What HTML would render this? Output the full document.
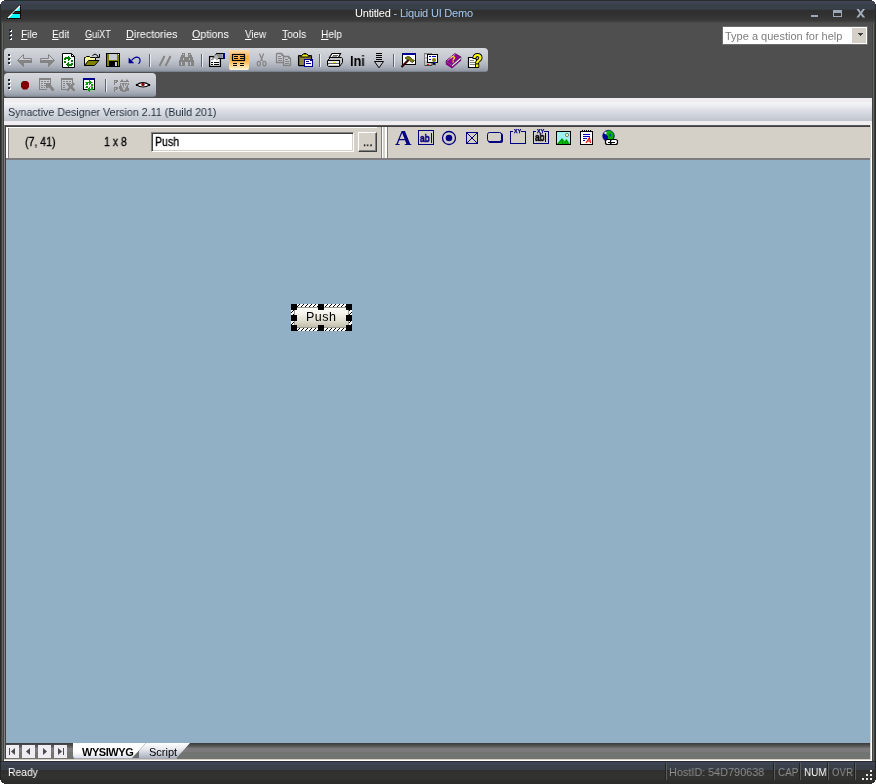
<!DOCTYPE html>
<html lang="en">
<head>
<meta charset="utf-8">
<title>Untitled - Liquid UI Demo</title>
<style>
html,body{margin:0;padding:0;}
body{width:876px;height:784px;overflow:hidden;background:#4f4f4f;position:relative;
 font-family:"Liberation Sans","DejaVu Sans",sans-serif;font-size:11px;color:#fff;}
.a{position:absolute;}
.t{position:absolute;white-space:nowrap;line-height:13px;height:13px;transform-origin:0 0;will-change:transform;}
u{text-decoration:underline;text-underline-offset:1px;}
/* ---------- window frame ---------- */
#title{left:0;top:0;width:876px;height:23px;
 background:linear-gradient(#2a2d2c 0,#2a2d2c 1px,#3f4454 1px,#3e4352 3.500px,#3a4049 4.500px,#39404a 9px,#313533 10px,#2e2f2e 11px,#323232 16px,#3b3b3b 21px,#464646 22px,#4d4d4d 23px);}
#lb{left:0;top:23px;width:4px;height:761px;background:linear-gradient(90deg,#282a28 0,#282a28 1px,#3e403e 1px,#3e403e 2px,#646664 2px,#646664 3px,#424242 3px,#424242 4px);}
#rb{left:872px;top:23px;width:4px;height:761px;background:linear-gradient(90deg,#444444 0,#444444 1px,#646664 1px,#646664 2px,#3e403e 2px,#3e403e 3px,#282a28 3px,#282a28 4px);}
#menubg{left:4px;top:23px;width:868px;height:75px;background:#4f4f4f;}
/* ---------- toolbars ---------- */
.tb{position:absolute;left:4px;height:24px;border-radius:4px 4px 3px 3px;
 background:linear-gradient(#d5d9de 0,#cdd1d6 5px,#c4c8ce 11px,#b4b9c2 16px,#a3a9b4 20px,#8f96a3 23px,#6b7380 24px);}
.grip{position:absolute;width:2px;height:2px;background:#1e2a38;box-shadow:1px 1px 0 #fff;}
.sep{position:absolute;width:1px;height:16px;background:#5c6470;box-shadow:1px 0 0 #e8ebf0;}
/* ---------- caption panel ---------- */
#cap{left:4px;top:98px;width:868px;height:27px;
 background:linear-gradient(#f0edf1 0,#f0edf1 4px,#f3f5f7 5px,#e0e3e9 11px,#d0d4db 17px,#c0c6ce 23px,#f0edf1 23px,#f0edf1 27px);}
/* ---------- dialog bar ---------- */
#dlg{left:6px;top:127px;width:864px;height:31px;background:#d4d0c8;}
#main{left:6px;top:160px;width:864px;height:583px;background:#91afc5;}
#tabbar{left:6px;top:743px;width:864px;height:16px;
 background:linear-gradient(#3a3a3a 0,#4c4c4c 2px,#686a68 4.500px,#7b797b 5.500px,#7b797b 8.500px,#727472 9.500px,#727472 16px);}
.nav{position:absolute;top:745px;width:13px;height:13px;background:#f0edf2;}
#status{left:0;top:761px;width:876px;height:23px;
 background:linear-gradient(#282b2e 0,#282b2e 1px,#3f4454 1px,#3e4352 3.500px,#3a4049 4.500px,#39404a 8.500px,#2f302e 9.500px,#333432 15px,#2b2b2a 23px);}
.k{color:#000;font-size:12px;line-height:14px;height:14px;transform:scaleX(0.88);-webkit-text-stroke:0.300px #000;}
.h{position:absolute;width:6px;height:6px;background:#000;}
.ssep{position:absolute;top:763px;width:1px;height:17px;background:#5c5c5c;box-shadow:-1px 0 0 #222;}
</style>
</head>
<body>
<div class="a" id="title"></div>
<div class="a" id="menubg"></div>
<div class="a" id="lb"></div>
<div class="a" id="rb"></div>

<!-- toolbars -->
<div class="tb" id="tb1" style="top:48px;width:484px;"></div>
<div class="tb" id="tb2" style="top:73px;width:152px;"></div>

<div class="a" id="cap"></div>
<div class="a" style="left:5px;top:125px;width:865px;height:2px;background:linear-gradient(#585858 0,#585858 1px,#404040 1px,#404040 2px);"></div>
<div class="a" id="dlg"></div>
<div class="a" id="main"></div>
<div class="a" id="tabbar"></div>
<div class="a" style="left:4px;top:759px;width:868px;height:2px;background:linear-gradient(#d4d0c8 0,#d4d0c8 1px,#fff 1px,#fff 2px);"></div>
<div class="a" style="left:870px;top:125px;width:2px;height:635px;background:linear-gradient(90deg,#d4d0c8 0,#d4d0c8 1px,#fff 1px,#fff 2px);"></div><div class="a" style="left:870px;top:760px;width:2px;height:1px;background:#fff;"></div>
<div class="a" id="status"></div>

<div class="a" style="left:0;top:4px;width:1px;height:19px;background:#2a2c2b;"></div><div class="a" style="left:875px;top:4px;width:1px;height:19px;background:#2a2c2b;"></div><div class="a" style="left:0;top:761px;width:1px;height:23px;background:#242624;"></div><div class="a" style="left:875px;top:761px;width:1px;height:23px;background:#242624;"></div>
<!--TITLE-->
<svg class="a" style="left:7px;top:5px" width="14" height="14" viewBox="0 0 14 14">
 <polygon points="13,0.3 13,13 0.3,13" fill="#00ffff"/>
 <rect x="13" y="0" width="1" height="14" fill="#000"/>
 <rect x="0" y="13" width="14" height="1" fill="#000"/>
 <line x1="0.300" y1="12.300" x2="12.600" y2="0" stroke="#141414" stroke-width="0.700"/>
 <line x1="1" y1="13" x2="13" y2="1" stroke="#fff" stroke-width="1.3"/>
 <rect x="7.5" y="6" width="5.5" height="1" fill="#101010"/>
 <rect x="6.5" y="7" width="6.5" height="1" fill="#3a2020"/>
 <rect x="5.5" y="8" width="7.5" height="1" fill="#101010"/>
</svg>
<div class="t" id="ttl" style="left:354.5px;top:7px;font-size:11px;letter-spacing:-0.2px;color:#fff;">Untitled <span style="color:#a4c8f4">- Liquid UI Demo</span></div>
<div class="a" style="left:811px;top:15px;width:7px;height:2px;background:#9ca7b7;"></div>
<div class="a" style="left:833px;top:10px;width:7px;height:3px;border:1px solid #9ca7b7;border-top-width:3px;box-sizing:content-box;"></div>
<svg class="a" style="left:856px;top:9px" width="9.5" height="8.500" viewBox="0 0 10 9" preserveAspectRatio="none"><path d="M0.5 0 L3 0 L5 2.8 L7 0 L9.5 0 L6.3 4.4 L9.7 9 L7.1 9 L5 6 L2.9 9 L0.3 9 L3.7 4.4 Z" fill="#a3aebd"/></svg>
<!--MENU-->
<div class="grip" style="left:9px;top:29px"></div><div class="grip" style="left:9px;top:33px"></div><div class="grip" style="left:9px;top:37px"></div>
<div class="t m" style="left:20.6px;top:28px;transform:scaleX(0.93)"><u>F</u>ile</div>
<div class="t m" style="left:51.6px;top:28px;transform:scaleX(0.915)"><u>E</u>dit</div>
<div class="t m" style="left:84.6px;top:28px;transform:scaleX(0.83)"><u>G</u>uiXT</div>
<div class="t m" style="left:126.2px;top:28px;transform:scaleX(0.98)"><u>D</u>irectories</div>
<div class="t m" style="left:192.4px;top:28px;transform:scaleX(0.97)"><u>O</u>ptions</div>
<div class="t m" style="left:245px;top:28px;transform:scaleX(0.89)"><u>V</u>iew</div>
<div class="t m" style="left:282px;top:28px;transform:scaleX(0.94)"><u>T</u>ools</div>
<div class="t m" style="left:321.4px;top:28px;transform:scaleX(0.925)"><u>H</u>elp</div>
<div class="a" style="left:722px;top:26px;width:146px;height:19px;background:#fff;box-sizing:border-box;border:1px solid #6e6e6e;"></div>
<div class="t" id="hq" style="left:725px;top:30px;color:#7d7d7d;">Type a question for help</div>
<div class="a" style="left:852px;top:28px;width:14px;height:15px;background:#d4d0c8;"></div>
<div class="a" style="left:858px;top:33px;width:5px;height:1px;background:#404040;"></div><div class="a" style="left:859px;top:34px;width:3px;height:1px;background:#404040;"></div><div class="a" style="left:860px;top:35px;width:1px;height:1px;background:#404040;"></div>
<!--TB1-->
<div class="grip" style="left:8px;top:54px"></div><div class="grip" style="left:8px;top:58px"></div><div class="grip" style="left:8px;top:62px"></div>
<div class="sep" style="left:149px;top:54px;height:13px"></div>
<div class="sep" style="left:201px;top:54px;height:13px"></div>
<div class="sep" style="left:319px;top:54px;height:13px"></div>
<div class="sep" style="left:393px;top:54px;height:13px"></div>
<div class="a" style="left:229px;top:50px;width:20px;height:20px;border-radius:0 0 2px 2px;background:linear-gradient(#ffdcae 0,#ffc57a 4px,#ffac3e 8px,#ffbe5c 12px,#ffdc9c 16px,#ffeec8 19px,#fffbf0 20px);"></div>
<div class="t" style="left:350px;top:53.600px;font-size:14px;font-weight:bold;color:#000;letter-spacing:0px;line-height:15px;height:15px;transform:scaleX(0.900);">Ini</div>
<svg class="a" style="left:0;top:48px" width="500" height="25" viewBox="0 48 500 25">
<g shape-rendering="crispEdges">
 <!-- back / forward -->
 <path d="M17.500 60.500 L23.500 54.500 V58.500 H31.500 V62.500 H23.500 V66.500 Z" fill="#c9cdd2" stroke="#848484" stroke-width="1" shape-rendering="auto"/>
 <path d="M18.500 60 H32 V63 H24 V67 L17.500 60.500 Z" fill="#848484" shape-rendering="auto"/>
 <path d="M54.500 60.500 L48.500 54.500 V58.500 H40.500 V62.500 H48.500 V66.500 Z" fill="#c9cdd2" stroke="#848484" stroke-width="1" shape-rendering="auto"/>
 <path d="M53.500 60 H40 V63 H48 V67 L54.500 60.500 Z" fill="#848484" shape-rendering="auto"/>
 <!-- refresh doc -->
 <path d="M62.5 53.5 H71.5 L74.5 56.5 V67.5 H62.5 Z" fill="#fff" stroke="#000" shape-rendering="auto"/>
 <path d="M71.5 53.5 V56.5 H74.5" fill="none" stroke="#000" shape-rendering="auto"/>
 <g fill="#008000">
  <rect x="68" y="56" width="1" height="5"/><rect x="69" y="57" width="1" height="3"/><rect x="70" y="58" width="1" height="1"/>
  <rect x="65" y="57" width="3" height="2"/><rect x="64" y="58" width="2" height="2"/><rect x="64" y="61" width="2" height="2"/>
  <rect x="68" y="62" width="1" height="5"/><rect x="67" y="63" width="1" height="3"/><rect x="66" y="64" width="1" height="1"/>
  <rect x="69" y="64" width="3" height="2"/><rect x="71" y="63" width="2" height="2"/><rect x="71" y="60" width="2" height="2"/>
 </g>
 <!-- open folder -->
 <path d="M84.5 65.5 V57.5 H85.5 L86.5 56.5 H89.5 L90.5 57.5 H95.5 V60.5" fill="#ffff80" stroke="#000" shape-rendering="auto"/>
 <rect x="85" y="58" width="10" height="3" fill="#f6f6a0"/>
 <path d="M84.5 65.5 L88.5 60.5 H99 L94.5 65.5 Z" fill="#808000" stroke="#000" shape-rendering="auto"/>
 <path d="M92.5 55.5 Q95 52.5 97.5 55.5 L98 57" fill="none" stroke="#000" shape-rendering="auto"/>
 <path d="M96 57.5 H99.5 V54" fill="none" stroke="#000" shape-rendering="auto"/>
 <!-- save -->
 <rect x="106.5" y="53.5" width="13" height="13" fill="#808000" stroke="#000" shape-rendering="auto"/>
 <rect x="109" y="54" width="8" height="6" fill="#c8ccd2"/>
 <rect x="118" y="54" width="1" height="1" fill="#fff"/>
 <rect x="109" y="61" width="9" height="5" fill="#000"/>
 <rect x="115" y="62" width="2" height="4" fill="#c8ccd2"/>
 <!-- undo -->
 <path d="M128.600 57.600 V63.200 H134.200 Z" fill="#00008c" shape-rendering="auto"/>
 <path d="M131.500 60.500 Q135.500 55.500 139 57.800 Q141.500 60.500 138.500 64" fill="none" stroke="#00008c" stroke-width="1.150" shape-rendering="auto"/>
 <!-- // -->
 <path d="M159.5 66 L164.5 56 M165.5 66 L170.5 56" stroke="#848484" stroke-width="2" fill="none" shape-rendering="auto"/>
 <!-- binoculars -->
 <g fill="#848484">
  <rect x="182" y="53" width="3" height="2"/><rect x="188" y="53" width="3" height="2"/>
  <rect x="181" y="55" width="4" height="2"/><rect x="188" y="55" width="4" height="2"/>
  <rect x="180" y="57" width="13" height="3"/>
  <rect x="179" y="60" width="6" height="6"/><rect x="188" y="60" width="6" height="6"/>
  <rect x="185" y="59" width="3" height="3"/>
 </g>
 <rect x="183" y="54" width="1" height="1" fill="#c8ccd2"/><rect x="189" y="54" width="1" height="1" fill="#c8ccd2"/>
 <rect x="181" y="62" width="1" height="3" fill="#c0c4cc"/><rect x="190" y="62" width="1" height="3" fill="#c0c4cc"/>
 <rect x="183" y="58" width="1" height="2" fill="#c0c4cc"/><rect x="189" y="58" width="1" height="2" fill="#c0c4cc"/>
</g>
<g shape-rendering="crispEdges">
 <!-- properties -->
 <rect x="209.600" y="56.600" width="10.800" height="9.800" fill="#fff" stroke="#000" stroke-width="1.300" shape-rendering="auto"/>
 <rect x="211" y="62" width="2" height="1" fill="#000"/><rect x="214" y="62" width="5" height="1" fill="#000"/>
 <rect x="211" y="64" width="2" height="1" fill="#000"/><rect x="214" y="64" width="5" height="1" fill="#000"/>
 <path d="M211.500 59.500 L216.500 53.500 H222.500 V58.500 H218.500 L217 60.500 L215 58 L212.500 60.500 Z" fill="#8c8c8c" shape-rendering="auto"/>
 <path d="M212 59.500 L216 54.500 L219 58 L217 60 L215 57.500 L212.500 60 Z" fill="#b4b4b4" shape-rendering="auto"/>
 <rect x="216" y="53" width="7" height="1" fill="#000"/><rect x="218" y="58" width="5" height="1" fill="#000"/>
 <path d="M211.500 59.500 L216.500 53.500" stroke="#202020" stroke-width="1" stroke-dasharray="1 1" fill="none" shape-rendering="auto"/>
 <rect x="223" y="53" width="2" height="6" fill="#000090"/>
 <!-- highlighted list icon -->
 <rect x="232.500" y="54.500" width="12" height="6" fill="none" stroke="#000" stroke-width="1.200" shape-rendering="auto"/>
 <rect x="234" y="56" width="4" height="1" fill="#000"/><rect x="240" y="56" width="4" height="1" fill="#000"/>
 <rect x="234" y="58" width="4" height="1" fill="#000"/><rect x="240" y="58" width="4" height="1" fill="#000"/>
 <rect x="233" y="63" width="4" height="1.300" fill="#000"/><rect x="240" y="63" width="4" height="1.300" fill="#000"/>
 <rect x="233" y="65" width="4" height="1.300" fill="#000"/><rect x="240" y="65" width="4" height="1.300" fill="#000"/>
 <!-- scissors -->
 <g fill="none" stroke="#848484" stroke-width="1.200" shape-rendering="auto">
  <path d="M259.500 53.500 L262.500 61 M263.700 53.500 L260.700 61"/>
  <ellipse cx="258.800" cy="63.600" rx="1.600" ry="2.300"/><ellipse cx="264.400" cy="63.600" rx="1.600" ry="2.300"/>
 </g>
 <!-- copy -->
 <g fill="none" stroke="#848484" stroke-width="1.300" shape-rendering="auto">
  <path d="M276.500 53.500 H281.500 L283.500 55.500 V56 M276.500 53.500 V62.500 H283"/>
  <path d="M283.500 56.500 H288.500 L290.500 58.500 V65.500 H283.500 Z"/>
  <path d="M281.500 53.500 V55.500 H283.500 M288.500 56.500 V58.500 H290.500" stroke-width="0.800"/>
 </g>
 <g fill="#848484">
  <rect x="278" y="56" width="3" height="1"/><rect x="278" y="58" width="4" height="1"/><rect x="278" y="60" width="4" height="1"/>
  <rect x="285" y="59" width="3" height="1"/><rect x="285" y="61" width="4" height="1"/><rect x="285" y="63" width="4" height="1"/>
 </g>
 <!-- paste -->
 <rect x="298.600" y="55.600" width="12.800" height="10" rx="0.500" fill="#8a8440" stroke="#000" stroke-width="1.300" shape-rendering="auto"/>
 <path d="M300.500 57 L303 54 H307 L309.500 57 Z" fill="#f0f000" stroke="#000" stroke-width="1" shape-rendering="auto"/>
 <rect x="304" y="53" width="2" height="1" fill="#000"/>
 <rect x="304.5" y="59.5" width="8" height="7" fill="#fff" stroke="#000090" shape-rendering="auto"/>
 <rect x="310" y="59" width="3" height="2" fill="#000090"/>
 <rect x="306" y="61" width="3" height="1" fill="#000090"/><rect x="306" y="63" width="5" height="1" fill="#000090"/>
 <!-- printer -->
 <path d="M329.500 57.500 L332 53.500 H340.500 L338.500 57.500 Z" fill="#fff" stroke="#000" stroke-width="1.200" shape-rendering="auto"/>
 <rect x="333" y="55" width="5" height="1" fill="#606060"/><rect x="332" y="56" width="5" height="0.700" fill="#909090"/>
 <path d="M327.5 60.5 L330.5 57.5 H341.5 L342.5 58.5 V62.5 L339.5 66.5 H328.5 L327.5 65.5 Z" fill="#c4c4c4" stroke="#000" shape-rendering="auto"/>
 <rect x="328" y="60" width="11" height="1" fill="#000"/>
 <rect x="328" y="61" width="11" height="2" fill="#ececec"/>
 <rect x="328" y="63" width="11" height="1" fill="#606060"/>
 <rect x="329" y="64" width="10" height="1" fill="#fff"/>
 <rect x="333" y="62" width="3" height="1" fill="#e8e800"/>
 <path d="M339.5 60 V66" stroke="#000" fill="none" shape-rendering="auto"/>
 <!-- down arrow -->
 <rect x="376" y="53" width="6" height="1" fill="#000"/><rect x="376" y="55" width="6" height="1" fill="#000"/>
 <rect x="376" y="57" width="6" height="1" fill="#000"/><rect x="376" y="59" width="6" height="1" fill="#000"/>
 <path d="M374.500 61.500 H383.500 L379 67.800 Z" fill="#c2c6cc" stroke="#000" shape-rendering="auto"/>
 <!-- hammer window -->
 <rect x="402.5" y="53.5" width="13" height="11" fill="#fff" stroke="#000" shape-rendering="auto"/>
 <rect x="402" y="53" width="14" height="2" fill="#000090"/>
 <path d="M401.500 67 L408.500 60" stroke="#000" stroke-width="2.200" fill="none" shape-rendering="auto"/>
 <path d="M402 66.500 L408.500 60" stroke="#a00000" stroke-width="0.900" fill="none" shape-rendering="auto"/>
 <path d="M405 58 L407.500 56.500 L410 57 L412.500 59.500 L414.500 60.500 L412.500 62.500 L410.500 61.500 L409.500 60 L407 59.500 Z" fill="#808000" stroke="#202000" stroke-width="0.700" shape-rendering="auto"/>
 <!-- certificate -->
 <rect x="424.5" y="53.5" width="7" height="12" fill="#c0c0c0" stroke="#808080" shape-rendering="auto"/>
 <rect x="425" y="55" width="2" height="2" fill="#e8e8e8"/><rect x="425" y="59" width="2" height="2" fill="#e8e8e8"/>
 <rect x="427.5" y="54.5" width="10" height="8" fill="#fff" stroke="#000" shape-rendering="auto"/>
 <rect x="429" y="56" width="2" height="1" fill="#0000c0"/><rect x="432" y="56" width="4" height="1" fill="#0000c0"/>
 <rect x="429" y="59" width="2" height="1" fill="#0000c0"/>
 <circle cx="434" cy="60" r="2" fill="#808000" shape-rendering="auto"/>
 <rect x="433" y="62" width="3" height="1" fill="#0000ff"/>
 <path d="M432.5 63 V65.5 L434 64.5 L435.5 65.5 V63" fill="#000" shape-rendering="auto"/>
 <rect x="427" y="64" width="2" height="1" fill="#ff0000"/>
 <rect x="425" y="65" width="7" height="1" fill="#404040"/>
 <!-- book -->
 <path d="M446 61 L455 53.5 L461 57 L452 65 Z" fill="#900090" stroke="#500050" stroke-width="0.8" shape-rendering="auto"/>
 <path d="M446 61 V63.5 L452 67.5 L461 59.5 V57 L452 65 Z" fill="#fff" stroke="#404040" stroke-width="0.7" shape-rendering="auto"/>
 <path d="M446 61.2 L452 65.2 V67.3 L446 63.4 Z" fill="#900090" shape-rendering="auto"/>
 <path d="M447.500 60.500 L455.500 54" stroke="#e8b0e8" stroke-width="0.800" fill="none" shape-rendering="auto"/>
 <path d="M446 63.800 L452 67.600 L461 59.700" stroke="#800080" stroke-width="1.300" fill="none" shape-rendering="auto"/>
 <!-- help doc -->
 <path d="M468.5 57.5 H474.5 L476.5 59.5 V67.5 H468.5 Z" fill="#fff" stroke="#000" stroke-width="1.2" shape-rendering="auto"/>
 <rect x="470" y="60" width="4" height="1" fill="#808080"/><rect x="470" y="62" width="5" height="1" fill="#808080"/><rect x="470" y="64" width="5" height="1" fill="#808080"/>
</g>
</svg>
<svg class="a" style="left:440px;top:48px" width="48" height="25" viewBox="440 48 48 25">
 <text x="450.500" y="62.500" font-family="Liberation Sans, sans-serif" font-weight="bold" font-size="9" fill="#ffff00" transform="rotate(-8 453 60)">?</text>
 <text x="0" y="0" transform="translate(472.600 67) scale(0.860 1)" font-family="Liberation Sans, sans-serif" font-weight="bold" font-size="19" fill="#ffff00" stroke="#000" stroke-width="2.200" paint-order="stroke" stroke-linejoin="round">?</text>
</svg>
<!--TB2-->
<div class="grip" style="left:8px;top:79px"></div><div class="grip" style="left:8px;top:83px"></div><div class="grip" style="left:8px;top:87px"></div>
<div class="sep" style="left:105px;top:79px;height:13px"></div>
<svg class="a" style="left:0;top:73px" width="160" height="25" viewBox="0 73 160 25">
<g shape-rendering="crispEdges">
 <path d="M23 81 H27 L29 83 V87 L27 89.5 H23 L21 87 V83 Z" fill="#800000" shape-rendering="auto"/>
 <!-- grid + pointer (disabled) -->
 <g fill="#848484">
  <rect x="39" y="78" width="12" height="2"/><rect x="39" y="78" width="1" height="12"/><rect x="50" y="78" width="1" height="6"/><rect x="39" y="89" width="8" height="1"/>
  <rect x="41" y="81" width="2" height="1"/><rect x="44" y="81" width="2" height="1"/><rect x="47" y="81" width="2" height="1"/>
  <rect x="41" y="83" width="2" height="1"/><rect x="44" y="83" width="2" height="1"/>
  <rect x="41" y="85" width="2" height="1"/><rect x="44" y="85" width="2" height="1"/>
  <rect x="41" y="87" width="2" height="1"/><rect x="44" y="87" width="1" height="1"/>
  <path d="M46 83 H51 L51 85 L54.5 89.5 L52.5 91.5 L49 87.5 L46 88.5 Z" shape-rendering="auto"/>
 </g>
 <g fill="#848484">
  <rect x="61" y="78" width="12" height="2"/><rect x="61" y="78" width="1" height="12"/><rect x="72" y="78" width="1" height="6"/><rect x="61" y="89" width="6" height="1"/>
  <rect x="63" y="81" width="2" height="1"/><rect x="66" y="81" width="2" height="1"/><rect x="69" y="81" width="2" height="1"/>
  <rect x="63" y="83" width="2" height="1"/><rect x="66" y="83" width="2" height="1"/><rect x="69" y="83" width="2" height="1"/>
  <rect x="63" y="85" width="2" height="1"/>
  <rect x="63" y="87" width="2" height="1"/>
  <path d="M66 83.5 L68 82.5 L70.5 85 L73.5 82.5 L75 84 L72.5 86.5 L75.5 90 L73.5 91.5 L70.5 88.5 L68 91.5 L66.5 90 L69 87 Z" shape-rendering="auto"/>
 </g>
 <!-- window refresh -->
 <rect x="83.5" y="78.5" width="11" height="11" fill="#fff" stroke="#000" shape-rendering="auto"/>
 <rect x="83" y="78" width="12" height="2" fill="#000090"/>
 <g fill="#a0a0a0"><rect x="85" y="82" width="3" height="1"/><rect x="90" y="82" width="3" height="1"/><rect x="85" y="84" width="3" height="1"/><rect x="90" y="86" width="3" height="1"/><rect x="85" y="87" width="3" height="1"/></g>
 <g fill="#00a000">
  <rect x="89" y="80" width="1" height="5"/><rect x="90" y="81" width="1" height="3"/><rect x="91" y="82" width="1" height="1"/>
  <rect x="86" y="82" width="3" height="1"/><rect x="86" y="83" width="2" height="2"/><rect x="86" y="86" width="2" height="2"/>
  <rect x="89" y="87" width="1" height="5"/><rect x="88" y="88" width="1" height="3"/><rect x="87" y="89" width="1" height="1"/>
  <rect x="90" y="89" width="3" height="1"/><rect x="91" y="87" width="2" height="2"/><rect x="91" y="84" width="2" height="2"/>
 </g>
 <!-- disabled tool -->
 <g fill="#848484">
  <rect x="114" y="80" width="1" height="5"/><rect x="115" y="80" width="3" height="1"/><rect x="116" y="81" width="2" height="1"/><rect x="115" y="82" width="2" height="1"/>
  <rect x="114" y="87" width="1" height="5"/><rect x="115" y="87" width="3" height="1"/><rect x="116" y="88" width="2" height="1"/><rect x="115" y="89" width="2" height="1"/>
  <path d="M120 82 L122 79 L124 82 Z M125 82 L127 79 L129 82 Z" shape-rendering="auto"/>
  <rect x="120" y="81" width="9" height="1"/>
  <path d="M120 83 H129 V85 H128 V88 H129 V91 H126 V92 H122 V91 H120 V89 H119 V86 H120 Z"/>
 </g>
 <path d="M121 83.500 L124 89.500 L127.500 83.500" stroke="#c4c8ce" stroke-width="1.100" fill="none" shape-rendering="auto"/>
 <rect x="123.500" y="84" width="1" height="3" fill="#c4c8ce"/>
 <!-- eye -->
 <path d="M136.500 85 Q143 80.300 149.500 85 Q143 89 136.500 85 Z" fill="#fff" stroke="#000" stroke-width="1.200" shape-rendering="auto"/>
 <circle cx="143" cy="84.500" r="1.700" fill="#a00000" shape-rendering="auto"/>
 <rect x="136" y="84" width="2" height="2" fill="#000"/><rect x="148" y="84" width="2" height="2" fill="#000"/>
</g>
</svg>
<!--CAP-->
<div class="t" id="capt" style="left:7.600px;top:106px;color:#1f2c3a;transform:scaleX(0.972);">Synactive Designer Version 2.11 (Build 201)</div>
<!--DLG-->
<div class="a" style="left:4px;top:125px;width:1px;height:634px;background:#828082;"></div><div class="a" style="left:5px;top:125px;width:1px;height:634px;background:#404040;"></div>
<div class="a" style="left:6px;top:127px;width:2px;height:31px;background:#fff;"></div><div class="a" style="left:6px;top:127px;width:371px;height:1px;background:#fff;"></div><div class="a" style="left:382px;top:127px;width:1px;height:31px;background:#fff;"></div>
<div class="a" style="left:8px;top:128px;width:1px;height:30px;background:#808080;"></div>
<div class="a" style="left:381px;top:127px;width:1px;height:31px;background:#808080;"></div>
<div class="a" style="left:385px;top:127px;width:2px;height:31px;background:#fff;"></div>
<div class="a" style="left:387px;top:127px;width:1px;height:31px;background:#808080;"></div>
<div class="a" style="left:6px;top:158px;width:864px;height:2px;background:#7e7c7e;"></div>
<div class="t k" style="left:25px;top:135px;">(7, 41)</div>
<div class="t k" style="left:104px;top:135px;">1 x 8</div>
<div class="a" style="left:151px;top:132px;width:203px;height:20px;box-sizing:border-box;background:#fff;border:1px solid;border-color:#808080 #fff #fff #808080;box-shadow:inset 1px 1px 0 #404040,inset -1px -1px 0 #d4d0c8;"></div>
<div class="t k" style="left:155px;top:135px;">Push</div>
<div class="a" style="left:358px;top:132px;width:19px;height:20px;box-sizing:border-box;background:#d4d0c8;border:1px solid;border-color:#fff #404040 #404040 #fff;box-shadow:inset -1px -1px 0 #808080;"></div>
<div class="t k" style="left:363px;top:135px;letter-spacing:0.400px;color:#000;">...</div>
<div class="t" style="left:394.500px;top:125.500px;font-family:'Liberation Serif','DejaVu Serif',serif;font-weight:bold;font-size:22px;line-height:24px;height:24px;color:#000080;transform:scaleX(1.04);">A</div>
<div class="a" style="left:418px;top:130px;width:16px;height:15px;box-sizing:border-box;border:1px solid #000080;"></div>
<div class="t" style="left:420px;top:132px;font-size:10.500px;font-weight:bold;color:#000080;line-height:12px;height:12px;transform:scaleX(0.800);-webkit-text-stroke:0.400px #000080;">ab</div>
<div class="a" style="left:431px;top:133px;width:1px;height:10px;background:#000080;"></div>
<div class="a" style="left:533px;top:131px;width:16px;height:13px;box-sizing:border-box;border:1px solid #000080;"></div>
<div class="t" style="left:534.800px;top:131.300px;font-size:10.500px;font-weight:bold;color:#000;line-height:12px;height:12px;transform:scaleX(0.780);-webkit-text-stroke:0.400px #000;">ab</div>
<div class="a" style="left:545px;top:133px;width:1px;height:9px;background:#000;"></div>
<div class="a" style="left:536px;top:129px;width:8px;height:4px;background:#d4d0c8;"></div>
<div class="t" style="left:536.500px;top:128.300px;font-size:4.600px;font-weight:bold;color:#000080;line-height:7px;height:7px;letter-spacing:0.300px;transform:scaleX(1.150);-webkit-text-stroke:0.250px #000080;">XY</div>
<div class="a" style="left:510px;top:131px;width:16px;height:13px;box-sizing:border-box;border:1px solid #000080;"></div>
<div class="a" style="left:513px;top:129px;width:8px;height:4px;background:#d4d0c8;"></div>
<div class="t" style="left:513.500px;top:128.300px;font-size:4.600px;font-weight:bold;color:#000080;line-height:7px;height:7px;letter-spacing:0.300px;transform:scaleX(1.150);-webkit-text-stroke:0.250px #000080;">XY</div>
<svg class="a" style="left:388px;top:127px" width="240" height="22" viewBox="388 127 240 22">
 <circle cx="449" cy="138" r="6.500" fill="none" stroke="#000080" stroke-width="1.300"/>
 <circle cx="449" cy="138" r="3.300" fill="#000080"/>
 <g shape-rendering="crispEdges">
 <rect x="466.500" y="132.500" width="11" height="11" fill="none" stroke="#000080" shape-rendering="auto"/>
 <path d="M467 133 L477 143 M477 133 L467 143" stroke="#000080" stroke-width="1" fill="none" shape-rendering="auto"/>
 <rect x="488" y="133" width="15" height="10" rx="2.500" fill="#000080" shape-rendering="auto"/>
 <rect x="487.500" y="132.500" width="14" height="9" rx="2" fill="#d4d0c8" stroke="#000080" shape-rendering="auto"/>
 <!-- picture -->
 <rect x="556.500" y="131.500" width="14" height="13" fill="#a0f0f0" stroke="#000" shape-rendering="auto"/>
 <path d="M557 144 L562 138 L564.500 141 L566.500 139 L570 144 Z" fill="#00c000" shape-rendering="auto"/>
 <path d="M558 144 L562 139 L563 144 M565 144 L566.500 140 L568 144" stroke="#006000" stroke-width="0.600" fill="none" shape-rendering="auto"/>
 <circle cx="567" cy="135" r="1.600" fill="#ffffa0" stroke="#404040" stroke-width="0.600" shape-rendering="auto"/>
 <!-- notepad -->
 <rect x="580.500" y="131.500" width="12" height="13" fill="#fff" stroke="#000" shape-rendering="auto"/>
 <g fill="#000"><rect x="582" y="130" width="1" height="2"/><rect x="584" y="130" width="1" height="2"/><rect x="586" y="130" width="1" height="2"/><rect x="588" y="130" width="1" height="2"/><rect x="590" y="130" width="1" height="2"/></g>
 <rect x="583" y="134" width="7" height="1" fill="#0000c0"/><rect x="583" y="136" width="7" height="1" fill="#0000c0"/><rect x="583" y="138" width="4" height="1" fill="#0000c0"/><rect x="583" y="140" width="2" height="1" fill="#0000c0"/>
 <path d="M586 143 L589.500 137.500 L590.500 143 M587.500 141 H590" stroke="#f00000" stroke-width="1.100" fill="none" shape-rendering="auto"/>
 <!-- globe + chain -->
 <circle cx="608.500" cy="136" r="5.800" fill="#0000a0" stroke="#000040" stroke-width="0.600" shape-rendering="auto"/>
 <path d="M606.500 131 Q611 129.500 613.500 133.500 Q614.500 137 612 140 Q609 141.500 607.500 139 Q609 137 607 135.500 Q605 134 606.500 131 Z" fill="#00b000" shape-rendering="auto"/>
 <path d="M609 134 Q611 133 611.500 135.500 Q610.500 137.500 609.500 136.500 Z" fill="#0040c0" shape-rendering="auto"/>
 <circle cx="605.500" cy="133" r="1.200" fill="#e0e0ff" shape-rendering="auto"/>
 <rect x="605.500" y="139.500" width="6" height="5" rx="2" fill="#fff" stroke="#000" stroke-width="1.200" shape-rendering="auto"/>
 <rect x="610.500" y="139.500" width="7" height="5" rx="2" fill="#fff" stroke="#000" stroke-width="1.200" shape-rendering="auto"/>
 <rect x="608" y="141.500" width="7" height="1" fill="#000"/>
 </g>
</svg>
<!--MAIN-->
<div class="a" id="hatch" style="left:291px;top:304px;width:61px;height:27px;background:repeating-linear-gradient(135deg,#000 0,#000 1.100px,#fff 1.100px,#fff 2.830px);"></div>
<div class="a" style="left:294px;top:307px;width:55px;height:21px;box-sizing:border-box;border-radius:3px;border:1px solid #9a9a8e;background:linear-gradient(#fdfdf9 0,#f3f2ea 6px,#e2e0d2 12px,#cbc8b8 17px,#c2bfae 19px);"></div>
<div class="t" id="pushl" style="left:306px;top:309.500px;font-size:12.500px;line-height:15px;height:15px;color:#000;letter-spacing:0.500px;">Push</div>
<div class="h" style="left:291px;top:304px"></div><div class="h" style="left:318px;top:304px"></div><div class="h" style="left:346px;top:304px"></div>
<div class="h" style="left:291px;top:315px"></div><div class="h" style="left:346px;top:315px"></div>
<div class="h" style="left:291px;top:325px"></div><div class="h" style="left:318px;top:325px"></div><div class="h" style="left:346px;top:325px"></div>
<!--TABS-->
<div class="nav" style="left:6px"></div><div class="nav" style="left:22px"></div><div class="nav" style="left:38px"></div><div class="nav" style="left:54px"></div>
<svg class="a" style="left:0;top:743px" width="200" height="17" viewBox="0 743 200 17">
 <g fill="#4a4a4a">
  <rect x="9" y="748" width="1" height="7"/><path d="M15 748 V755 L11 751.500 Z"/>
  <path d="M30 748 V755 L26 751.500 Z"/>
  <path d="M43 748 V755 L47 751.500 Z"/>
  <path d="M58 748 V755 L62 751.500 Z"/><rect x="63" y="748" width="1" height="7"/>
 </g>
 <defs><linearGradient id="tg" x1="0" y1="0" x2="0" y2="1"><stop offset="0" stop-color="#ffffff"/><stop offset="0.400" stop-color="#e8eaef"/><stop offset="1" stop-color="#acb1c0"/></linearGradient>
 <linearGradient id="tw" x1="0" y1="0" x2="0" y2="1"><stop offset="0" stop-color="#ffffff"/><stop offset="0.600" stop-color="#ffffff"/><stop offset="1" stop-color="#dadee6"/></linearGradient></defs>
 <path d="M146 743 H190 L176.500 758 H139 V751 Z" fill="url(#tg)"/>
 <path d="M73 743 H146 L132 758 H75 Q73 758 73 756 Z" fill="url(#tw)"/>
 <path d="M132.500 758 H139 V751 Z" fill="#6c6c6c"/>
 <rect x="74" y="758" width="103" height="1" fill="#a4a7b0"/>
</svg>
<div class="t" style="left:81.500px;top:746px;color:#000;font-weight:bold;letter-spacing:-0.450px;">WYSIWYG</div>
<div class="t" style="left:148.500px;top:746px;color:#000;">Script</div>
<!--STATUS-->
<div class="t" style="left:7.500px;top:766px;color:#fff;transform:scaleX(0.940);">Ready</div>
<div class="ssep" style="left:666px"></div><div class="ssep" style="left:774px"></div><div class="ssep" style="left:800px"></div><div class="ssep" style="left:828px"></div><div class="ssep" style="left:855px"></div>
<div class="t" style="left:668.500px;top:766px;color:#8c8c8c;transform:scaleX(0.985);">HostID: 54D790638</div>
<div class="t" style="left:777.500px;top:766px;color:#8c8c8c;transform:scaleX(0.900);">CAP</div>
<div class="t" style="left:803.500px;top:766px;color:#fff;transform:scaleX(0.900);">NUM</div>
<div class="t" style="left:831.500px;top:766px;color:#8c8c8c;transform:scaleX(0.880);">OVR</div>
<svg class="a" style="left:861px;top:769px" width="12" height="12" viewBox="0 0 12 12" shape-rendering="crispEdges">
 <g fill="#e8e8e8"><rect x="9" y="1" width="2" height="2"/><rect x="5" y="5" width="2" height="2"/><rect x="9" y="5" width="2" height="2"/><rect x="1" y="9" width="2" height="2"/><rect x="5" y="9" width="2" height="2"/><rect x="9" y="9" width="2" height="2"/></g>
</svg>
<svg class="a" style="left:0;top:0" width="876" height="784" viewBox="0 0 876 784" shape-rendering="crispEdges">
 <g fill="#fff">
 <rect x="0" y="0" width="4" height="1"/><rect x="0" y="1" width="2" height="1"/><rect x="0" y="2" width="1" height="2"/>
 <rect x="872" y="0" width="4" height="1"/><rect x="874" y="1" width="2" height="1"/><rect x="875" y="2" width="1" height="2"/>
 <rect x="0" y="783" width="4" height="1"/><rect x="0" y="782" width="2" height="1"/><rect x="0" y="780" width="1" height="2"/>
 <rect x="872" y="783" width="4" height="1"/><rect x="874" y="782" width="2" height="1"/><rect x="875" y="780" width="1" height="2"/>
 </g>
</svg>
</body>
</html>
